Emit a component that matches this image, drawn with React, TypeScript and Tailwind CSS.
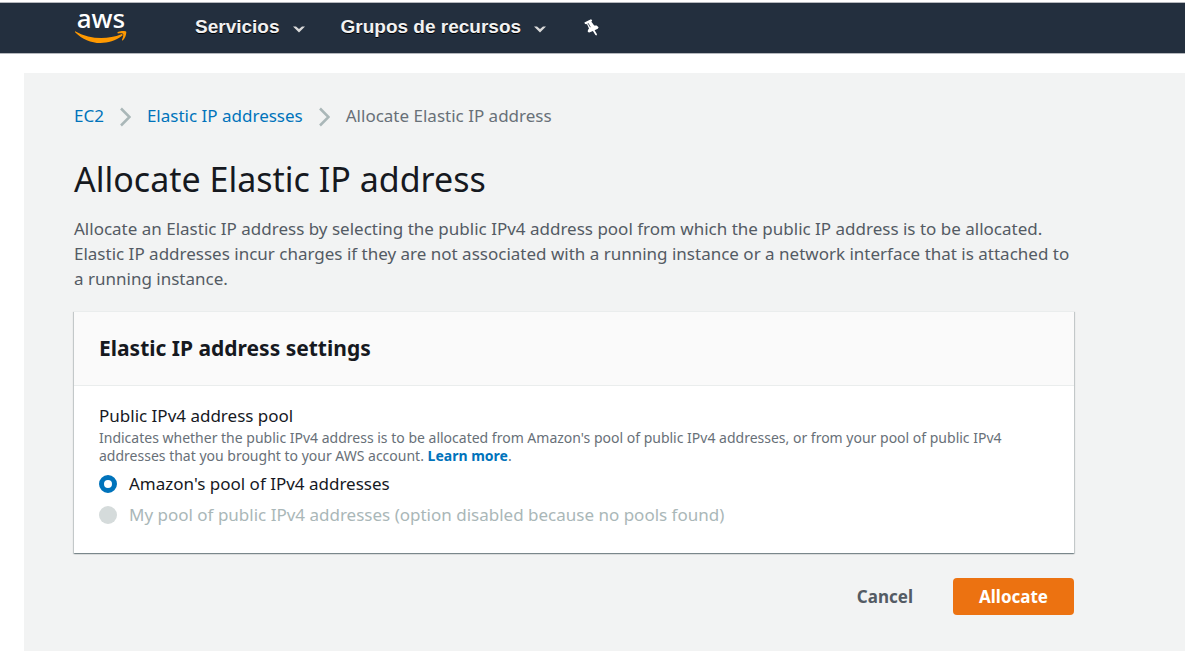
import type { ReactNode } from "react";

function Caret() {
  return (
    <svg width="12" height="7" viewBox="0 0 12 7" aria-hidden="true">
      <path d="M0 0.5 L3 0.5 L6 3 L9 0.5 L12 0.5 L6 6.5 Z" fill="#d9d9d9" />
    </svg>
  );
}

function Separator() {
  return (
    <svg width="11" height="20" viewBox="0 0 11 20" fill="none" aria-hidden="true" className="mt-0.5">
      <path d="M1 1.5 L9.5 10 L1 18.5" stroke="#aab7b8" strokeWidth="2.5" />
    </svg>
  );
}

function Logo() {
  return (
    <a href="#home" aria-label="aws" className="flex w-[52px] flex-col items-center pb-1">
      <span className="h-[22px] font-['Noto_Sans',sans-serif] text-[26px] font-medium leading-[18px] text-white">aws</span>
      <svg width="52" height="12" viewBox="0 0 52 12" aria-hidden="true">
        <path
          d="M0.6 0.4 C15 8.4 32 8.8 46.3 3.2 C47.4 2.8 48.2 4 47.2 4.8 C40.5 9.8 33 12 25.5 12 C16 12 7 8 0.3 1.4 C-0.2 0.8 0 0.1 0.6 0.4 Z"
          fill="#f90"
        />
        <path
          d="M42.6 1.2 C45 -0.4 50.4 -0.3 51.1 0.6 C51.8 1.6 50.5 7 48 9.2 C47.4 9.7 46.8 9.4 47 8.8 C47.8 7 48.7 3.8 48.1 3 C47.5 2.2 44.6 2.3 43.2 2.4 C42.4 2.4 42.1 1.6 42.6 1.2 Z"
          fill="#f90"
        />
      </svg>
    </a>
  );
}

function MenuButton({ children }: { children: ReactNode }) {
  return (
    <button type="button" className="flex items-center gap-[13px] whitespace-nowrap">
      <span className="[text-shadow:0_1px_0_#000]">{children}</span>
      <span className="mt-1 flex">
        <Caret />
      </span>
    </button>
  );
}

export default function App() {
  return (
    <div className="flex min-h-screen flex-col bg-white pt-0.5 font-['Noto_Sans',sans-serif] text-[17px] text-[#16191f]">
      <header className="flex h-[52px] items-center border-y border-[#b5b8bd] bg-[#232f3e] pl-[75px] font-['Liberation_Sans',Arial,sans-serif] text-[19px] font-bold text-[#f2f2f2]">
        <Logo />
        <nav className="ml-[68px] flex items-center gap-9 pb-0.5">
          <MenuButton>Servicios</MenuButton>
          <MenuButton>Grupos de recursos</MenuButton>
          <button type="button" aria-label="Anclar" className="pl-0.5">
            <svg width="15" height="17" viewBox="0 0 15 17" fill="#fff" aria-hidden="true">
              <path d="M0.4 3.6 L7 0.2 L8.2 1.2 L7.4 2.8 L10.2 6.6 L12.6 6.5 L14.6 8.3 L13.8 9.7 L10.6 11.2 L13 15.2 L12.5 16.4 L11.4 15.9 L8.9 11.9 L5.3 13.6 L3.8 12.9 L3.9 11 L5 9.4 L3.1 5.2 L1 5.1 Z" />
              <path d="M4 4.1 L6.4 8.2" stroke="#232f3e" strokeWidth="0.8" />
            </svg>
          </button>
        </nav>
      </header>

      <main className="ml-6 mt-[19px] flex-1 bg-[#f2f3f3] px-[50px] pt-[30px]">
        <div className="max-w-[1000px]">
          <nav aria-label="Breadcrumb" className="flex h-[25px] items-center gap-4 leading-[25px]">
            <a href="#ec2" className="text-[#0073bb]">EC2</a>
            <Separator />
            <a href="#addresses" className="text-[#0073bb]">Elastic IP addresses</a>
            <Separator />
            <span className="text-[#687078]">Allocate Elastic IP address</span>
          </nav>

          <h1 className="mt-7 text-[34px] leading-[46px]">Allocate Elastic IP address</h1>
          <p className="mt-3.5 leading-[25px] text-[#545b64]">
            Allocate an Elastic IP address by selecting the public IPv4 address pool from which the public IP address is to be allocated. Elastic IP addresses incur charges if they are not associated with a running instance or a network interface that is attached to a running instance.
          </p>

          <section className="mt-5 border-t border-[#eaeded] bg-white shadow-[0_1px_1px_0_rgba(0,28,36,0.3),1px_1px_1px_0_rgba(0,28,36,0.15),-1px_1px_1px_0_rgba(0,28,36,0.15)]">
            <h2 className="border-b border-[#eaeded] bg-[#fafafa] px-[25px] py-[22px] text-[21px] font-bold leading-[29px]">
              Elastic IP address settings
            </h2>
            <fieldset aria-labelledby="pool-title" aria-describedby="pool-help" className="px-[25px] pb-[26px] pt-[17px]">
              <div id="pool-title" className="leading-[25px]">Public IPv4 address pool</div>
              <p id="pool-help" className="mt-px text-sm leading-[18px] text-[#687078]">
                Indicates whether the public IPv4 address is to be allocated from Amazon's pool of public IPv4 addresses, or from your pool of public IPv4 addresses that you brought to your AWS account.{" "}
                <a href="#learn" className="font-bold text-[#0073bb]">Learn more</a>.
              </p>
              <label className="mt-1.5 flex items-center gap-3 leading-[25px]">
                <input type="radio" name="pool" defaultChecked className="size-[18px] appearance-none rounded-full border-[5px] border-[#0073bb] bg-white" />
                Amazon's pool of IPv4 addresses
              </label>
              <label className="mt-1.5 flex items-center gap-3 leading-[25px] text-[#aab7b8]">
                <input type="radio" name="pool" disabled className="size-[18px] appearance-none rounded-full bg-[#d5dbdb]" />
                My pool of public IPv4 addresses (option disabled because no pools found)
              </label>
            </fieldset>
          </section>

          <div className="mt-[25px] flex justify-end gap-3.5 pb-9 font-bold leading-[25px]">
            <button type="button" className="px-[26px] py-1.5 text-[#545b64]">Cancel</button>
            <button type="button" className="rounded-sm bg-[#ec7211] px-[26px] py-1.5 text-white">Allocate</button>
          </div>
        </div>
      </main>
    </div>
  );
}
